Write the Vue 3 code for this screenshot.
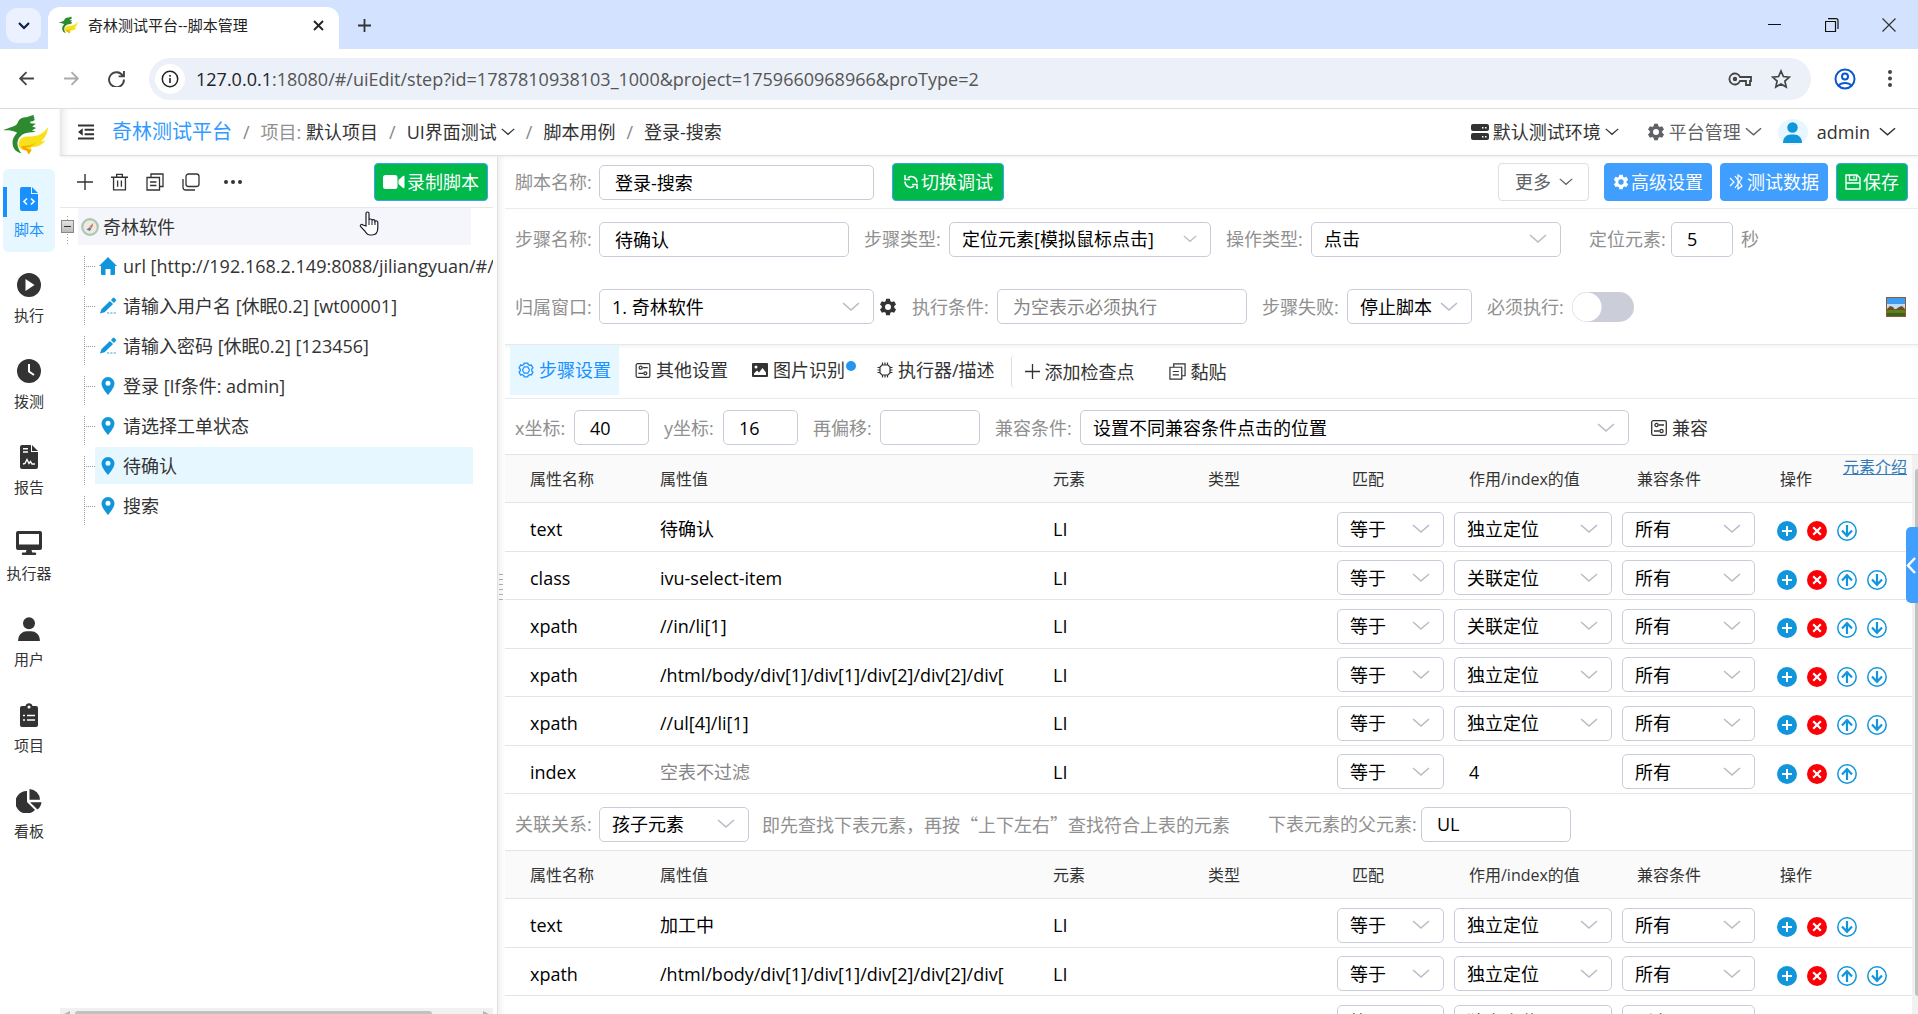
<template>
  <div class="window">
    <!-- icon set -->
    <svg class="sprite" aria-hidden="true">
      <symbol id="logo" viewBox="8 340 140 124">
        <path fill="#2d8a2f" d="M9 389c14-7 33-10 41-18 4-5 4-12 10-16 7-5 15-5 22-6l20-7c-2 4-1 6 2 9-2 2-1 4 1 6l-6 5-9 1 2 5 16 1-11 9 12 4-13 8 12 4c-14 3-28 2-36 6-12 6-21 17-20 31 1 13 6 21 12 28-16-2-26-14-27-30-1-11 5-23 14-32-8-7-27-9-42-8z"/>
        <path fill="#f7e11b" d="M56 430c3-18 15-23 33-22 25 1 42-9 56-28-1 17-8 33-22 43 6 0 10-1 14-4-8 15-26 22-42 22-5 7-1 14-8 21-5-3-4-8-8-11-13-2-26-7-23-21z"/>
        <path fill="#f5a800" d="M64 437c17 1 31-3 44-10-9 9-19 13-31 14 6 6 13 8 20 7-5 4-6 9-10 14-5-3-4-8-8-11-8-2-15-6-15-14z"/>
      </symbol>
      <symbol id="chevron" viewBox="0 0 18 10"><path d="M1 1l8 7 8-7" fill="none" stroke="currentColor" stroke-width="1.6"/></symbol>
      <symbol id="back" viewBox="0 0 16 16"><path d="M15 8H2M8 2L2 8l6 6" fill="none" stroke="currentColor" stroke-width="1.7"/></symbol>
      <symbol id="reload" viewBox="0 0 16 16"><path d="M14 5.500A7 7 0 1 0 15 9M15 1v5h-5" fill="none" stroke="currentColor" stroke-width="1.8"/></symbol>
      <symbol id="info" viewBox="0 0 18 18"><circle cx="9" cy="9" r="7.700" fill="none" stroke="currentColor" stroke-width="1.500"/><path d="M8.200 8h1.600v5H8.200zM8.200 5h1.600v1.700H8.200z" fill="currentColor"/></symbol>
      <symbol id="key" viewBox="0 0 24 14"><path d="M12 5h11v4h-1v4h-4V9h-6a5.500 5.500 0 1 1 0-4z" fill="none" stroke="currentColor" stroke-width="1.800"/><circle cx="7" cy="7" r="2.200" fill="currentColor"/></symbol>
      <symbol id="star" viewBox="0 0 20 20"><path d="M10 2l2.400 5.500 6 .6-4.500 4 1.300 5.900L10 14.900 4.800 18l1.300-5.900-4.500-4 6-.6z" fill="none" stroke="currentColor" stroke-width="1.700"/></symbol>
      <symbol id="profile" viewBox="0 0 22 22"><g fill="none" stroke="currentColor" stroke-width="2"><circle cx="11" cy="11" r="9.500"/><circle cx="11" cy="8.500" r="3"/><path d="M4.500 17.500c3-3.500 10-3.500 13 0"/></g></symbol>
      <symbol id="fold" viewBox="0 0 18 16"><path d="M0 0h17v2.200H0zM7 4.600h10v2.200H7zM7 9.200h10v2.200H7zM0 13.800h17V16H0zM5 4v8L0 8z" fill="currentColor"/></symbol>
      <symbol id="server" viewBox="0 0 18 16"><rect width="18" height="7" rx="2" fill="currentColor"/><rect y="9" width="18" height="7" rx="2" fill="currentColor"/><path d="M11 3h1.500v1.500H11zM14 3h1.500v1.500H14zM11 12h1.500v1.500H11zM14 12h1.500v1.500H14z" fill="#fff"/></symbol>
      <symbol id="gear" viewBox="0 0 24 24"><path fill="currentColor" d="M9.500 1h5l.7 3.200 1.900 1.100 3.100-1 2.500 4.300-2.400 2.200v2.300l2.400 2.200-2.500 4.300-3.100-1-1.900 1.100-.7 3.300h-5l-.7-3.300-1.900-1.100-3.100 1-2.500-4.300 2.400-2.200v-2.300L1.300 8.600l2.500-4.300 3.100 1 1.900-1.100zM12 8a4 4 0 1 0 0 8 4 4 0 0 0 0-8z"/></symbol>
      <symbol id="cog" viewBox="0 0 18 18"><g fill="none" stroke="currentColor"><path d="M6.500 2.800L7 1.200h4l.5 1.600 1.700 1 1.800-.4 1.800 3.200L15.500 8v2l1.300 1.400-1.800 3.200-1.800-.4-1.700 1-.5 1.600H7l-.5-1.600-1.700-1-1.800.4-1.800-3.200L2.500 10V8L1.200 6.600 3 3.400l1.800.4z" stroke-width="1.400"/><path d="M7 5.500h4L13 9l-2 3.500H7L5 9z" stroke-width="1.300"/></g></symbol>
      <symbol id="user" viewBox="0 0 20 22"><circle cx="10" cy="5.700" r="5.500" fill="currentColor"/><path d="M0 22c0-6 4-9 8-9h4c4 0 8 3 8 9z" fill="currentColor"/></symbol>
      <symbol id="script" viewBox="0 0 18 24"><path fill="currentColor" d="M2 0h9v7h7v15a2 2 0 0 1-2 2H2a2 2 0 0 1-2-2V2a2 2 0 0 1 2-2zM12 0l6 6h-6z"/><path d="M7 11.500l-3 3 3 3M11 11.500l3 3-3 3" fill="none" stroke="#fff" stroke-width="1.700"/></symbol>
      <symbol id="play" viewBox="0 0 24 24"><circle cx="12" cy="12" r="12" fill="currentColor"/><path d="M8.500 6l9 6-9 6z" fill="#fff"/></symbol>
      <symbol id="clock" viewBox="0 0 24 24"><circle cx="12" cy="12" r="12" fill="currentColor"/><path d="M12 5v7.500l5 3.500" fill="none" stroke="#fff" stroke-width="2"/></symbol>
      <symbol id="report" viewBox="0 0 18 24"><path fill="currentColor" d="M2 0h9v7h7v15a2 2 0 0 1-2 2H2a2 2 0 0 1-2-2V2a2 2 0 0 1 2-2zM12 0l6 6h-6z"/><path d="M3 3.700h5M3 7h5M3 19l2-.5 2-4 2 4 1.500-2L12 19h3" fill="none" stroke="#fff" stroke-width="1.400"/></symbol>
      <symbol id="screen" viewBox="0 0 26 24"><path fill="currentColor" fill-rule="evenodd" d="M2 0h22a2 2 0 0 1 2 2v15a2 2 0 0 1-2 2h-8.500l.7 2.500H19a1.200 1.200 0 0 1 0 2.500H7a1.200 1.200 0 0 1 0-2.500h2.800l.7-2.500H2a2 2 0 0 1-2-2V2a2 2 0 0 1 2-2zm1 3v10.500h20V3z"/></symbol>
      <symbol id="board" viewBox="0 0 18 24"><path fill="currentColor" d="M2 3h3.500a3.600 3.600 0 0 1 7 0H16a2 2 0 0 1 2 2v17a2 2 0 0 1-2 2H2a2 2 0 0 1-2-2V5a2 2 0 0 1 2-2z"/><circle cx="9" cy="4" r="1.500" fill="#fff"/><path d="M3 12.500h2M7 12.500h8M3 17h2M7 17h8" stroke="#fff" stroke-width="1.600"/></symbol>
      <symbol id="pie" viewBox="0 0 26 24"><path fill="currentColor" d="M11 2v11l8 8A11.300 11.300 0 1 1 11 2zM13.500 0A11 11 0 0 1 24 10.700H13.500zM14 13.300h11.500a10 10 0 0 1-4 7.200z"/></symbol>
      <symbol id="plus" viewBox="0 0 16 16"><path d="M8 0v16M0 8h16" stroke="currentColor" stroke-width="1.400"/></symbol>
      <symbol id="trash" viewBox="0 0 18 18"><path d="M0 4h18M6 4V1h6v3M2.700 4v13.300h12.600V4M7 7.500v6.500M11 7.500v6.500" fill="none" stroke="currentColor" stroke-width="1.400"/></symbol>
      <symbol id="copy" viewBox="0 0 18 18"><path d="M1 4.500h12.500V17H1zM5 4.500V1h12v12.500h-3.500M4 9h6.500M4 12.500h6.500" fill="none" stroke="currentColor" stroke-width="1.300"/></symbol>
      <symbol id="stack" viewBox="0 0 18 18"><rect x="4" y="1" width="13" height="12.500" rx="2.500" fill="none" stroke="currentColor" stroke-width="1.300"/><path d="M1 6v8.500A2.500 2.500 0 0 0 3.500 17H13" fill="none" stroke="currentColor" stroke-width="1.300"/></symbol>
      <symbol id="dots" viewBox="0 0 18 4"><g fill="currentColor"><circle cx="2" cy="2" r="2"/><circle cx="9" cy="2" r="2"/><circle cx="16" cy="2" r="2"/></g></symbol>
      <symbol id="video" viewBox="0 0 22 14"><path fill="currentColor" d="M2.500 0h9.500A2.500 2.500 0 0 1 14.500 2.500v9A2.500 2.500 0 0 1 12 14H2.500A2.500 2.500 0 0 1 0 11.500v-9A2.500 2.500 0 0 1 2.500 0zM15.500 5L20 1c1-.5 1.500 0 1.500 1v10c0 1-.5 1.500-1.500 1l-4.500-4z"/></symbol>
      <symbol id="sync" viewBox="0 0 16 16"><path d="M5 3.800C9 1 14 3.500 14 8.500M2 1v4.500h5M11 12.200C7 15 2 12.500 2 7.500M14 15v-4.500H9" fill="none" stroke="currentColor" stroke-width="1.500"/></symbol>
      <symbol id="tool" viewBox="0 0 16 16"><path d="M6 2l7 10-4 3V1l4 3-7 10M1 4l4 4-4 4" fill="none" stroke="currentColor" stroke-width="1.200"/></symbol>
      <symbol id="save" viewBox="0 0 16 16"><path d="M1 1h11l3 3v11H1zM4.500 1v5h7V1M1 9h14M9 2.500v2" fill="none" stroke="currentColor" stroke-width="1.400"/></symbol>
      <symbol id="sliders" viewBox="0 0 16 16"><g fill="none" stroke="currentColor" stroke-width="1.300"><rect x=".7" y=".7" width="14.600" height="14.600" rx="1.500"/><circle cx="5.500" cy="5" r="1.600"/><circle cx="10.500" cy="11" r="1.600"/><path d="M7.500 5H13M3 11h5.500"/></g></symbol>
      <symbol id="image" viewBox="0 0 16 14"><path fill="currentColor" fill-rule="evenodd" d="M1 0h14a1 1 0 0 1 1 1v12a1 1 0 0 1-1 1H1a1 1 0 0 1-1-1V1a1 1 0 0 1 1-1zm1 12h12V9.500L10.500 5 7 9.500 5 7.500l-3 3zM4 2.500a1.500 1.500 0 1 0 0 3 1.500 1.500 0 0 0 0-3z"/></symbol>
      <symbol id="chip" viewBox="0 0 16 16"><path d="M5 3h6l2 2v6l-2 2H5l-2-2V5zM5.500 3V.5M8 3V.5M10.500 3V.5M5.500 15.500V13M8 15.500V13M10.500 15.500V13M.5 5.500H3M.5 8H3M.5 10.500H3M13 5.500h2.500M13 8h2.500M13 10.500h2.500" fill="none" stroke="currentColor" stroke-width="1.200"/></symbol>
      <symbol id="home" viewBox="0 0 18 18"><path fill="#1296db" d="M9 0l9 9h-2v8a1 1 0 0 1-1 1h-3.500v-6h-5v6H3a1 1 0 0 1-1-1V9H0z"/></symbol>
      <symbol id="pen" viewBox="0 0 16 16"><path fill="#1296db" d="M10.600 2.600l1.900-1.900q.5-.4 1 0l1.600 1.700q.5.500 0 1l-1.800 1.900zM9.700 3.500l2.800 2.800L5 13.500l-4.200 1.200 1.500-4z"/><path d="M7 14.300h2M10 14.300h2M13 14.300h2" stroke="#7fc4ea" stroke-width="1.300"/></symbol>
      <symbol id="pin" viewBox="0 0 14 18"><path fill="#1296db" fill-rule="evenodd" d="M7 0a6.500 6.500 0 0 1 6.500 6.500C13.500 11 7 18 7 18S.5 11 .5 6.500A6.500 6.500 0 0 1 7 0zm0 3.800a2.500 2.500 0 1 0 0 5 2.500 2.500 0 0 0 0-5z"/></symbol>
      <symbol id="add" viewBox="0 0 20 20"><circle cx="10" cy="10" r="10" fill="#1296db"/><path d="M10 5v10M5 10h10" stroke="#fff" stroke-width="2"/></symbol>
      <symbol id="remove" viewBox="0 0 20 20"><circle cx="10" cy="10" r="10" fill="#fb0007"/><path d="M6.200 6.200l7.600 7.600M13.800 6.200l-7.600 7.600" stroke="#fff" stroke-width="2.200"/></symbol>
      <symbol id="down" viewBox="0 0 20 20"><circle cx="10" cy="10" r="9.200" fill="#fff" stroke="#1296db" stroke-width="1.500"/><path d="M10 4v11M5 9.500l5 5.300 5-5.300" fill="none" stroke="#1296db" stroke-width="2.200"/></symbol>
      <symbol id="up" viewBox="0 0 20 20"><circle cx="10" cy="10" r="9.200" fill="#fff" stroke="#1296db" stroke-width="1.500"/><path d="M10 16V5M5 10.500l5-5.300 5 5.300" fill="none" stroke="#1296db" stroke-width="2.200"/></symbol>
    </svg>

    <div class="tab-strip">
      <button class="tab-search" aria-label="Tabs"><svg width="12" height="8" viewBox="0 0 12 8"><path d="M1 1l5 5 5-5" fill="none" stroke="#0b1f4b" stroke-width="2.2" /></svg></button>
      <div class="browser-tab">
        <svg width="20" height="18"><use href="#logo" /></svg>
        <span class="tab-title">奇林测试平台--脚本管理</span>
        <button class="bare" aria-label="Close tab"><svg width="11" height="11" viewBox="0 0 11 11"><path d="M1 1l9 9M10 1l-9 9" stroke="#222" stroke-width="1.8" /></svg></button>
      </div>
      <button class="bare new-tab" aria-label="New tab"><svg width="13" height="13" viewBox="0 0 13 13"><path d="M6.500 0v13M0 6.500h13" stroke="#333" stroke-width="1.8" /></svg></button>
      <div class="window-buttons">
        <button class="bare" aria-label="Minimize"><svg width="14" height="14" viewBox="0 0 14 14"><path d="M0 6.500h13" stroke="#111" /></svg></button>
        <button class="bare" aria-label="Restore"><svg width="14" height="14" viewBox="0 0 14 14"><path d="M.5 3.500h10v10H.5zM3 .700h8a2 2 0 0 1 2 2V11" fill="none" stroke="#111" stroke-width="1.200" /></svg></button>
        <button class="bare" aria-label="Close"><svg width="14" height="14" viewBox="0 0 14 14"><path d="M.5.5l13 13M13.500.5l-13 13" stroke="#333" stroke-width="1.200" /></svg></button>
      </div>
    </div>

    <div class="address-row">
      <button class="bare" aria-label="Back"><svg width="17" height="17"><use href="#back" /></svg></button>
      <button class="bare forward" aria-label="Forward"><svg width="17" height="17"><use href="#back" /></svg></button>
      <button class="bare" aria-label="Reload"><svg width="17" height="17"><use href="#reload" /></svg></button>
      <div class="address">
        <span class="site-info"><svg width="18" height="18"><use href="#info" /></svg></span>
        <span class="url"><b>127.0.0.1</b>:18080/#/uiEdit/step?id=1787810938103_1000&amp;project=1759660968966&amp;proType=2</span>
        <svg width="24" height="14"><use href="#key" /></svg>
        <svg width="20" height="20"><use href="#star" /></svg>
      </div>
      <button class="bare profile" aria-label="Profile"><svg width="22" height="22"><use href="#profile" /></svg></button>
      <button class="bare menu" aria-label="Menu"><svg width="4" height="17" viewBox="0 0 4 17"><g fill="#444"><circle cx="2" cy="2" r="2" /><circle cx="2" cy="8.500" r="2" /><circle cx="2" cy="15" r="2" /></g></svg></button>
    </div>

    <div class="app">
      <nav class="rail">
        <svg class="brand" width="46" height="41"><use href="#logo" /></svg>
        <a v-for="item in navItems" :key="item.label" href="#" :class="{ active: item.active }">
          <svg :width="item.width" height="24"><use :href="'#' + item.icon" /></svg>
          <span>{{ item.label }}</span>
        </a>
      </nav>

      <div class="body">
        <header class="app-header">
          <svg width="17" height="16"><use href="#fold" /></svg>
          <a class="site-name" href="#">奇林测试平台</a>
          <span class="slash">/</span>
          <span><span class="muted">项目: </span>默认项目</span>
          <span class="slash">/</span>
          <span class="drop">UI界面测试<svg width="14" height="8"><use href="#chevron" /></svg></span>
          <span class="slash">/</span>
          <span>脚本用例</span>
          <span class="slash">/</span>
          <span>登录-搜索</span>
          <div class="header-right">
            <span class="drop"><svg width="18" height="16"><use href="#server" /></svg>默认测试环境<svg width="14" height="8"><use href="#chevron" /></svg></span>
            <span class="drop manage"><svg width="18" height="18"><use href="#gear" /></svg>平台管理<svg width="17" height="10"><use href="#chevron" /></svg></span>
            <span class="drop account"><i class="avatar"><svg width="19" height="21"><use href="#user" /></svg></i>admin<svg width="17" height="10"><use href="#chevron" /></svg></span>
          </div>
        </header>

        <div class="columns">
          <aside class="tree-panel">
            <div class="tree-tools">
              <button v-for="tool in treeTools" :key="tool.icon" class="bare" :aria-label="tool.label">
                <svg :width="tool.width" :height="tool.height"><use :href="'#' + tool.icon" /></svg>
              </button>
              <button class="btn green record"><svg width="22" height="14"><use href="#video" /></svg>录制脚本</button>
            </div>
            <ul class="tree">
              <li class="root">
                <span class="expander"></span>
                <span class="root-label">
                  <svg width="18" height="18" viewBox="0 0 18 18"><circle cx="9" cy="9" r="7.800" fill="#eeebdc" stroke="#abc6b7" stroke-width="2.200" /><path d="M5.500 11.500L9 9l1.500 2-2 2z" fill="#6674b8" /><path d="M8.500 8.500l4-3.500-1.500 5z" fill="#df6a5a" /></svg>
                  奇林软件
                </span>
              </li>
              <li v-for="step in steps" :key="step.text" :class="['step', { selected: step.selected }]">
                <span class="branch"></span>
                <a href="#"><svg width="18" height="18"><use :href="'#' + step.icon" /></svg><span>{{ step.text }}</span></a>
              </li>
            </ul>
            <div class="scroll-x"><span class="arrow-left"></span><span class="thumb-x"></span><span class="arrow-right"></span></div>
            <svg class="hand" width="20" height="25" viewBox="0 0 20 25"><path d="M7 15V2.500C7 .5 10 .5 10 2.500V9.500C10 7.500 13 7.500 13 9.500 13.500 8 16 8.200 16 10.500c1-1.300 2.800-.5 2.800 1V17c0 4-2 7-6 7h-1.500c-2.500 0-3.800-1.300-5-3.300L1.500 15.500c-.8-1.500 1-3 2.500-1.500z" fill="#fff" stroke="#1b1b2b" stroke-width="1.200" /><path d="M10 9.500V14M13 9.500V14M16 10.500V14" stroke="#1b1b2b" /></svg>
          </aside>

          <div class="splitter"><i v-for="n in 6" :key="n"></i></div>

          <main class="editor">
            <div class="row name-row">
              <label for="scriptName">脚本名称:</label>
              <input id="scriptName" v-model="scriptName" class="w-large">
              <button class="btn green switch-btn"><svg width="16" height="16"><use href="#sync" /></svg>切换调试</button>
              <div class="actions">
                <button class="btn plain">更多<svg width="14" height="8"><use href="#chevron" /></svg></button>
                <button class="btn blue"><svg width="16" height="16"><use href="#gear" /></svg>高级设置</button>
                <button class="btn blue"><svg width="16" height="16"><use href="#tool" /></svg>测试数据</button>
                <button class="btn green"><svg width="16" height="16"><use href="#save" /></svg>保存</button>
              </div>
            </div>

            <div class="row step-row">
              <label for="stepName">步骤名称:</label>
              <input id="stepName" v-model="stepName" class="w-medium">
              <label for="stepType">步骤类型:</label>
              <span class="select w-type"><select id="stepType"><option>定位元素[模拟鼠标点击]</option></select><svg width="14" height="8"><use href="#chevron" /></svg></span>
              <label for="opType">操作类型:</label>
              <span class="select w-medium"><select id="opType"><option>点击</option></select><svg width="18" height="10"><use href="#chevron" /></svg></span>
              <label for="locate" class="after-gap">定位元素:</label>
              <input id="locate" v-model="locateSeconds" class="w-tiny">
              <span class="unit">秒</span>
            </div>

            <div class="row window-row">
              <label for="ownWindow">归属窗口:</label>
              <span class="select w-large"><select id="ownWindow"><option>1. 奇林软件</option></select><svg width="18" height="10"><use href="#chevron" /></svg></span>
              <button class="bare gear-btn" aria-label="设置"><svg width="18" height="18"><use href="#gear" /></svg></button>
              <label for="condition">执行条件:</label>
              <input id="condition" class="w-medium" placeholder="为空表示必须执行">
              <label for="onFail">步骤失败:</label>
              <span class="select w-fail"><select id="onFail"><option>停止脚本</option></select><svg width="18" height="10"><use href="#chevron" /></svg></span>
              <label for="must">必须执行:</label>
              <input id="must" type="checkbox" class="toggle">
              <svg class="thumb" width="20" height="20" viewBox="0 0 20 20"><rect width="20" height="20" fill="#8a5a3c" /><rect x="1" y="1" width="18" height="10" fill="#3f9df0" /><path d="M1 7h18v5H1z" fill="#b9defa" /><path d="M1 12l3-3 3 1 2 3 4-3 3-1 3 3v2H1z" fill="#7b4a16" /><path d="M1 13h18v6H1z" fill="#5f7f1c" /><path d="M1 16h18v3H1z" fill="#3f611a" /></svg>
            </div>

            <div class="tabs">
              <a v-for="tab in tabs" :key="tab.text" href="#" :class="{ active: tab.active }">
                <svg :width="16" :height="tab.height"><use :href="'#' + tab.icon" /></svg>{{ tab.text }}<i v-if="tab.dot" class="dot"></i>
              </a>
              <button class="bare check-btn"><svg width="15" height="15"><use href="#plus" /></svg>添加检查点</button>
              <button class="bare paste-btn"><svg width="17" height="17"><use href="#copy" /></svg>黏贴</button>
            </div>

            <div class="row offset-row">
              <label for="posX" class="short">x坐标:</label>
              <input id="posX" v-model="posX" class="w-small">
              <label for="posY" class="short">y坐标:</label>
              <input id="posY" v-model="posY" class="w-small">
              <label for="offset" class="mid">再偏移:</label>
              <input id="offset" class="w-offset">
              <label for="compat">兼容条件:</label>
              <span class="select w-wide"><select id="compat"><option>设置不同兼容条件点击的位置</option></select><svg width="18" height="10"><use href="#chevron" /></svg></span>
              <button class="bare compat-btn"><svg width="16" height="16"><use href="#sliders" /></svg>兼容</button>
            </div>

            <div class="scroll-area">
              <div class="tables">
                <a class="intro" href="#">元素介绍</a>
                <template v-for="(table, t) in tables" :key="t">
                  <div v-if="t === 1" class="row relation-row">
                    <label for="relation">关联关系:</label>
                    <span class="select w-relation"><select id="relation"><option>孩子元素</option></select><svg width="18" height="10"><use href="#chevron" /></svg></span>
                    <span class="hint">即先查找下表元素，再按“上下左右”查找符合上表的元素</span>
                    <label for="parent" class="parent-label">下表元素的父元素:</label>
                    <input id="parent" v-model="parentTag" class="w-relation">
                  </div>
                  <table>
                    <colgroup>
                      <col class="c-name"><col><col class="c-element"><col class="c-type"><col class="c-match"><col class="c-effect"><col class="c-compat"><col class="c-ops">
                    </colgroup>
                    <thead>
                      <tr><th v-for="head in heads" :key="head">{{ head }}</th></tr>
                    </thead>
                    <tbody>
                      <tr v-for="(row, r) in table" :key="r">
                        <td>{{ row.name }}</td>
                        <td><input v-model="row.value" class="cell-input" :aria-label="row.name" :placeholder="row.hint"></td>
                        <td>{{ row.tag }}</td>
                        <td></td>
                        <td class="control"><span class="select"><select aria-label="匹配"><option>等于</option></select><svg width="18" height="10"><use href="#chevron" /></svg></span></td>
                        <td v-if="row.index"><input v-model="row.index" class="cell-input" aria-label="index"></td>
                        <td v-else class="control"><span class="select"><select aria-label="作用"><option>{{ row.effect }}</option></select><svg width="18" height="10"><use href="#chevron" /></svg></span></td>
                        <td class="control"><span class="select"><select aria-label="兼容条件"><option>所有</option></select><svg width="18" height="10"><use href="#chevron" /></svg></span></td>
                        <td class="ops">
                          <button v-for="op in row.ops" :key="op" class="bare" :aria-label="op"><svg width="20" height="20"><use :href="'#' + op" /></svg></button>
                        </td>
                      </tr>
                    </tbody>
                  </table>
                </template>
              </div>
              <div class="scroll-y"><span class="thumb-y"></span></div>
              <button class="drawer" aria-label="展开"><svg width="10" height="17" viewBox="0 0 10 17"><path d="M9 1L2 8.500 9 16" fill="none" stroke="#fff" stroke-width="2.500" /></svg></button>
            </div>
          </main>
        </div>
      </div>
    </div>
  </div>
</template>

<script setup>
import { ref } from 'vue';

const scriptName = ref('登录-搜索');
const stepName = ref('待确认');
const locateSeconds = ref('5');
const posX = ref('40');
const posY = ref('16');
const parentTag = ref('UL');

const navItems = [
  { label: '脚本', icon: 'script', width: 18, active: true },
  { label: '执行', icon: 'play', width: 24 },
  { label: '拨测', icon: 'clock', width: 24 },
  { label: '报告', icon: 'report', width: 18 },
  { label: '执行器', icon: 'screen', width: 26 },
  { label: '用户', icon: 'user', width: 22 },
  { label: '项目', icon: 'board', width: 18 },
  { label: '看板', icon: 'pie', width: 26 },
];

const treeTools = [
  { label: '添加', icon: 'plus', width: 16, height: 16 },
  { label: '删除', icon: 'trash', width: 17, height: 18 },
  { label: '复制', icon: 'copy', width: 18, height: 18 },
  { label: '层叠', icon: 'stack', width: 18, height: 18 },
  { label: '更多', icon: 'dots', width: 18, height: 4 },
];

const steps = [
  { icon: 'home', text: 'url [http://192.168.2.149:8088/jiliangyuan/#/' },
  { icon: 'pen', text: '请输入用户名 [休眠0.2] [wt00001]' },
  { icon: 'pen', text: '请输入密码 [休眠0.2] [123456]' },
  { icon: 'pin', text: '登录 [If条件: admin]' },
  { icon: 'pin', text: '请选择工单状态' },
  { icon: 'pin', text: '待确认', selected: true },
  { icon: 'pin', text: '搜索' },
];

const tabs = [
  { text: '步骤设置', icon: 'cog', height: 16, active: true },
  { text: '其他设置', icon: 'sliders', height: 15 },
  { text: '图片识别', icon: 'image', height: 14, dot: true },
  { text: '执行器/描述', icon: 'chip', height: 16 },
];

const heads = ['属性名称', '属性值', '元素', '类型', '匹配', '作用/index的值', '兼容条件', '操作'];

const first = ['add', 'remove', 'down'];
const middle = ['add', 'remove', 'up', 'down'];
const last = ['add', 'remove', 'up'];
const path = '/html/body/div[1]/div[1]/div[2]/div[2]/div[';

const tables = ref([
  [
    { name: 'text', value: '待确认', tag: 'LI', effect: '独立定位', ops: first },
    { name: 'class', value: 'ivu-select-item', tag: 'LI', effect: '关联定位', ops: middle },
    { name: 'xpath', value: '//in/li[1]', tag: 'LI', effect: '关联定位', ops: middle },
    { name: 'xpath', value: path, tag: 'LI', effect: '独立定位', ops: middle },
    { name: 'xpath', value: '//ul[4]/li[1]', tag: 'LI', effect: '独立定位', ops: middle },
    { name: 'index', value: '', hint: '空表不过滤', tag: 'LI', index: '4', ops: last },
  ],
  [
    { name: 'text', value: '加工中', tag: 'LI', effect: '独立定位', ops: first },
    { name: 'xpath', value: path, tag: 'LI', effect: '独立定位', ops: middle },
    { name: '', value: '', tag: '', effect: '独立定位', ops: middle },
  ],
]);
</script>

<style>
html,
body {
  margin: 0;
  overflow: hidden;
}
</style>

<style scoped>
.window {
  height: 100vh;
  display: flex;
  flex-direction: column;
  overflow: hidden;
  background: #fff;
  color: #333;
  font: 18px/24px 'Open Sans', 'Noto Sans CJK SC', sans-serif;
}
.window * {
  box-sizing: border-box;
}
.sprite {
  position: absolute;
  width: 0;
  height: 0;
}
svg {
  flex: none;
  display: block;
}
a {
  color: inherit;
  text-decoration: none;
}
button,
input,
select {
  font: inherit;
  color: inherit;
  margin: 0;
}
button {
  cursor: pointer;
}
.bare {
  display: flex;
  align-items: center;
  padding: 0;
  border: 0;
  background: none;
}

/* Browser frame */
.tab-strip {
  flex: none;
  display: flex;
  height: 49px;
  padding-left: 6px;
  background: #d3e2fe;
}
.tab-search {
  width: 35px;
  height: 35px;
  margin: 8px 7px 0 0;
  padding: 0;
  border: 0;
  border-radius: 11px;
  background: #ebf1fe;
  display: flex;
  align-items: center;
  justify-content: center;
}
.browser-tab {
  width: 291px;
  height: 42px;
  margin-top: 7px;
  padding: 0 15px 6px 10px;
  border-radius: 12px 12px 0 0;
  background: #fff;
  display: flex;
  align-items: center;
  color: #222;
}
.tab-title {
  flex: 1;
  padding-left: 10px;
  font-size: 15px;
}
.new-tab {
  margin-left: 19px;
  height: 50px;
}
.window-buttons {
  display: flex;
  gap: 43px;
  margin-left: auto;
  padding-right: 22px;
  height: 49px;
}
.address-row {
  flex: none;
  display: flex;
  align-items: center;
  height: 60px;
  padding: 0 26px 0 18px;
  border-bottom: 1px solid #dcdcdc;
  color: #444;
}
.address-row > .bare {
  margin-right: 28px;
}
.address-row > .forward {
  transform: scaleX(-1);
  color: #aaa;
}
.address {
  flex: 1;
  display: flex;
  align-items: center;
  gap: 19px;
  height: 42px;
  margin: 0 23px 0 -4px;
  padding: 0 20px 0 6px;
  border-radius: 21px;
  background: #ebf0f9;
}
.site-info {
  display: flex;
  align-items: center;
  justify-content: center;
  width: 30px;
  height: 30px;
  border-radius: 50%;
  background: #fff;
  color: #222;
}
.url {
  flex: 1;
  margin-left: -8px;
  color: #555;
}
.url b {
  font-weight: 400;
  color: #222;
}
.address-row > .profile {
  color: #0b57d0;
  margin-right: 32px;
}
.address-row > .menu {
  margin: 0;
}

/* Navigation rail */
.app {
  flex: 1;
  min-height: 0;
  display: flex;
}
.rail {
  flex: none;
  width: 60px;
  padding: 5px 5px 0 3px;
}
.brand {
  margin-bottom: 14px;
}
.rail a {
  display: flex;
  flex-direction: column;
  align-items: center;
  height: 83px;
  margin-bottom: 3px;
  padding-top: 18px;
  border-radius: 6px;
  font-size: 15px;
  white-space: nowrap;
}
.rail a span {
  margin-top: 6px;
}
.rail .active {
  color: #1890ff;
  background: linear-gradient(#1890ff, #1890ff) 0 18px / 4px 30px no-repeat #e6f7ff;
}

/* Header */
.body {
  flex: 1;
  min-width: 0;
  display: flex;
  flex-direction: column;
}
.app-header {
  flex: none;
  display: flex;
  align-items: center;
  height: 47px;
  padding: 0 22px 0 18px;
  border-bottom: 1px solid #e0e0e0;
  box-shadow: inset 8px 0 8px -6px #ddd, 0 1px 3px #eee;
  z-index: 1;
}
.site-name {
  margin-left: 17px;
  font-size: 20px;
  color: #3399ff;
}
.slash {
  margin: 0 11px;
  color: #888;
}
.muted {
  color: #909090;
}
.drop {
  display: flex;
  align-items: center;
  gap: 4px;
}
.header-right {
  display: flex;
  gap: 28px;
  margin-left: auto;
}
.manage {
  color: #606266;
}
.account {
  margin-left: -12px;
  gap: 9px;
}
.avatar {
  display: flex;
  align-items: center;
  justify-content: center;
  width: 30px;
  height: 26px;
  border-radius: 50%;
  background: #e6f7ff;
  color: #1296db;
}

/* Buttons */
.btn {
  display: flex;
  align-items: center;
  height: 38px;
  padding: 0 8px;
  border: 1px solid #409eff;
  border-radius: 4px;
  color: #fff;
  white-space: nowrap;
}
.btn svg {
  margin-right: 2px;
}
.green {
  background: #00b94a;
}
.blue {
  background: #409eff;
}
.plain {
  width: 91px;
  padding: 0 16px;
  gap: 8px;
  border-color: #dcdfe6;
  background: #fff;
  color: #606266;
}

/* Step tree */
.columns {
  flex: 1;
  min-height: 0;
  display: flex;
}
.tree-panel {
  position: relative;
  flex: none;
  width: 433px;
  display: flex;
  flex-direction: column;
}
.tree-tools {
  display: flex;
  align-items: center;
  gap: 18px;
  height: 52px;
  padding: 0 5px 0 17px;
  border-bottom: 1px solid #e8e8e8;
}
.tree-tools .bare:nth-child(5) {
  margin-left: 6px;
}
.record {
  margin-left: auto;
}
.tree {
  flex: 1;
  margin: 0;
  padding: 0;
  list-style: none;
  overflow: hidden;
  white-space: nowrap;
}
.root {
  display: flex;
  height: 37px;
}
.expander {
  width: 18px;
  background:
    linear-gradient(#333, #333) 4px 18px / 7px 1px no-repeat,
    linear-gradient(#e4e4e4, #bbb) 2px 13px / 11px 11px no-repeat,
    linear-gradient(#888, #888) 1px 12px / 13px 13px no-repeat,
    repeating-linear-gradient(#aaa 0 1px, #fff 1px 3px) 7px 8px / 1px 30px no-repeat;
}
.root-label {
  display: flex;
  align-items: center;
  gap: 4px;
  width: 393px;
  padding-left: 3px;
  background: #f5f6fb;
}
.step {
  display: flex;
  height: 40px;
  padding-left: 24px;
}
.branch {
  flex: none;
  width: 11px;
  background:
    repeating-linear-gradient(#999 0 1px, #fff 1px 2px) 0 11px / 1px 29px no-repeat,
    repeating-linear-gradient(90deg, #999 0 1px, #fff 1px 2px) 0 21px / 11px 1px no-repeat;
}
.step a {
  display: flex;
  align-items: center;
  gap: 6px;
  width: 378px;
  height: 37px;
  margin-top: 2px;
  padding-left: 4px;
}
.selected a {
  background: #e6f7ff;
}
.scroll-x {
  display: flex;
  align-items: flex-end;
  height: 6px;
  padding: 0 4px;
  background: #f1f1f1;
}
.thumb-x {
  width: 357px;
  height: 3px;
  margin: 0 auto 0 5px;
  border-radius: 3px 3px 0 0;
  background: #c1c1c1;
}
.arrow-left {
  border-bottom: 3px solid #b5b5b5;
  border-left: 6px solid transparent;
}
.arrow-right {
  border-bottom: 3px solid #b5b5b5;
  border-right: 6px solid transparent;
}
.hand {
  position: absolute;
  left: 299px;
  top: 55px;
}
.splitter {
  flex: none;
  display: flex;
  flex-direction: column;
  justify-content: center;
  align-items: flex-end;
  gap: 4px;
  width: 12px;
  padding: 4px 2px 0 0;
  background: linear-gradient(90deg, #fff 4px, #dedede 4px 5px, #f1f1f1 5px, #fff 12px);
}
.splitter i {
  width: 4px;
  height: 1px;
  background: #aaa;
}

/* Editor form */
.editor {
  flex: 1;
  min-width: 0;
  display: flex;
  flex-direction: column;
}
.row {
  flex: none;
  display: flex;
  align-items: center;
  padding-left: 10px;
  white-space: nowrap;
}
.row label {
  flex: none;
  width: 85px;
  margin-left: 15px;
  color: #909090;
}
.row label:first-child {
  width: 84px;
  margin-left: 0;
}
.row label.short,
.row label.short:first-child {
  width: 59px;
}
.row label.mid {
  width: 67px;
}
.row label.after-gap {
  width: 82px;
  margin-left: 28px;
}
.row input:not(.toggle),
.select select {
  height: 35px;
  border: 1px solid #c9ccd8;
  border-radius: 5px;
  background: #fff;
  color: #000;
  outline: none;
}
.row input:not(.toggle) {
  padding: 0 15px;
}
input::placeholder {
  color: #858585;
  opacity: 1;
}
.select {
  display: grid;
  align-items: center;
}
.select select {
  grid-area: 1 / 1;
  width: 100%;
  padding: 0 12px;
  appearance: none;
}
.select svg {
  grid-area: 1 / 1;
  justify-self: end;
  margin-right: 14px;
  color: #b8bcc4;
  pointer-events: none;
}
.w-large {
  width: 275px;
}
.w-medium {
  width: 250px;
}
.w-type {
  width: 262px;
}
.w-tiny {
  width: 62px;
}
.w-small {
  width: 75px;
}
.w-offset {
  width: 100px;
}
.w-fail {
  width: 125px;
}
.w-relation {
  width: 150px;
}
.w-wide {
  flex: 0 1 549px;
}
.name-row {
  height: 53px;
  border-bottom: 1px solid #ebebeb;
}
.switch-btn {
  margin-left: 18px;
  padding: 0 10px;
}
.actions {
  display: flex;
  gap: 8px;
  margin-left: auto;
  padding-right: 10px;
}
.actions .plain {
  margin-right: 7px;
}
.step-row {
  height: 60px;
}
.unit {
  margin-left: 8px;
  color: #909090;
}
.window-row {
  height: 75px;
  padding-right: 12px;
}
.gear-btn {
  margin-left: 5px;
}
.toggle {
  appearance: none;
  width: 62px;
  height: 30px;
  border-radius: 15px;
  background: radial-gradient(circle at 15px 15px, #fff 14px, transparent 15px) #cbced9;
}
.thumb {
  margin-left: auto;
}

/* Tabs */
.tabs {
  flex: none;
  display: flex;
  gap: 8px;
  height: 55px;
  padding-left: 5px;
  border-top: 1px solid #e8e8e8;
  border-bottom: 1px solid #e8ebf0;
  box-shadow: inset 0 4px 4px -3px #eee;
}
.tabs a {
  position: relative;
  display: flex;
  align-items: center;
  gap: 5px;
  height: 50px;
  padding: 0 8px;
  white-space: nowrap;
}
.tabs .active {
  color: #1890ff;
  background: #e6f7ff;
}
.dot {
  position: absolute;
  right: -3px;
  top: 16px;
  width: 10px;
  height: 10px;
  border-radius: 50%;
  background: #2196f3;
}
.tabs a:nth-child(4) {
  margin-left: 8px;
}
.check-btn,
.paste-btn {
  gap: 5px;
  height: 33px;
  margin-top: 10px;
  padding: 0 13px;
}
.check-btn {
  border-left: 1px solid #dcdfe6;
  border-radius: 4px;
}
.offset-row {
  height: 56px;
  padding-top: 2px;
  border-bottom: 1px solid #e4e4e4;
}
.compat-btn {
  gap: 5px;
  margin-left: 22px;
}

/* Attribute tables */
.scroll-area {
  position: relative;
  flex: 1;
  min-height: 0;
  display: flex;
}
.tables {
  position: relative;
  flex: 1;
  overflow: hidden;
}
.intro {
  position: absolute;
  right: 5px;
  top: 0;
  font-size: 16px;
  line-height: 24px;
  color: #337ab7;
  text-decoration: underline;
}
table {
  width: 100%;
  table-layout: fixed;
  border-spacing: 0;
  white-space: nowrap;
}
.c-name {
  width: 130px;
}
.c-element {
  width: 155px;
}
.c-type {
  width: 144px;
}
.c-match {
  width: 117px;
}
.c-effect {
  width: 168px;
}
.c-compat {
  width: 143px;
}
.c-ops {
  width: 157px;
}
th,
td {
  padding: 0 0 0 25px;
  border-bottom: 1px solid #e4e4e4;
  text-align: left;
}
th {
  height: 48px;
  background: #fafafa;
  font-size: 16px;
  font-weight: 400;
}
td {
  height: 49px;
  padding-top: 4px;
  color: #000;
}
tr:nth-child(even) td {
  height: 48px;
}
.control {
  padding-left: 10px;
}
.cell-input {
  width: 100%;
  padding: 0;
  border: 0;
  background: none;
  outline: none;
}
.ops {
  padding-left: 22px;
}
.ops .bare {
  display: inline-flex;
  margin-right: 10px;
  vertical-align: middle;
}
.relation-row {
  height: 57px;
  padding-top: 4px;
  border-bottom: 1px solid #e4e4e4;
}
/* CJK family first keeps the quotes full width */
.hint {
  margin-left: 13px;
  font-family: 'Noto Sans CJK SC', sans-serif;
  color: #909090;
}
.row .parent-label {
  width: 153px;
  margin-left: 38px;
}
.scroll-y {
  flex: none;
  width: 6px;
  padding: 14px 0 18px 3px;
  background: #f1f1f1;
  display: flex;
}
.thumb-y {
  flex: 1;
  border-radius: 3px 0 0 3px;
  background: #c1c1c1;
}
.drawer {
  position: absolute;
  right: 0;
  top: 72px;
  width: 12px;
  height: 76px;
  padding: 0;
  border: 0;
  border-radius: 5px 0 0 5px;
  background: #409eff;
}
</style>
